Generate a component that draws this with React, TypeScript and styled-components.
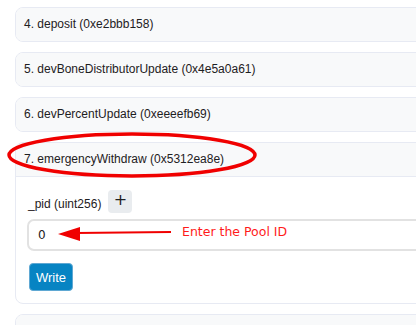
import styled, { createGlobalStyle } from "styled-components";

const GlobalStyle = createGlobalStyle`
  html, body {
    margin: 0;
    padding: 0;
    background: #ffffff;
    overflow: hidden;
  }
  body {
    font-family: "Liberation Sans", Arial, sans-serif;
    font-size: 12px;
    color: #1e2022;
  }
`;

const Page = styled.div`
  position: relative;
  width: 416px;
  height: 325px;
  overflow: hidden;
`;

const List = styled.div`
  display: flex;
  flex-direction: column;
  gap: 10px;
  width: 440px;
  padding: 7px 0 0 15px;
`;

const Card = styled.div`
  border: 1px solid #e7eaf3;
  border-radius: 8px;
  background: #ffffff;
  overflow: hidden;
`;

const Header = styled.div<{ $open?: boolean }>`
  background: #f8f9fa;
  padding: 7px 8px;
  min-height: 19px;
  line-height: 19px;
  font-size: 12px;
  color: #1e2022;
  border-bottom: ${(p) => (p.$open ? "1px solid #e7eaf3" : "none")};
`;

const Body = styled.div`
  display: flex;
  flex-direction: column;
  align-items: flex-start;
  padding: 13px 0 12px 11px;
`;

const ParamRow = styled.div`
  display: flex;
  align-items: flex-end;
  gap: 7px;
  margin-left: 1px;
`;

const ParamLabel = styled.span`
  font-size: 12px;
  line-height: 18px;
  color: #1e2022;
`;

const PlusButton = styled.button`
  width: 24px;
  height: 23px;
  padding: 0;
  border: none;
  border-radius: 4px;
  background: #e9ecef;
  color: #1e2022;
  font-family: "DejaVu Sans", sans-serif;
  font-size: 16px;
  line-height: 20px;
  display: flex;
  align-items: flex-start;
  justify-content: center;
`;

const Input = styled.input`
  box-sizing: border-box;
  width: 400px;
  height: 32px;
  margin-top: 6px;
  padding: 0 9px;
  border: 2px solid #e2e2e2;
  border-radius: 7px;
  font-family: "DejaVu Sans", sans-serif;
  font-size: 12px;
  color: #1e2022;
  outline: none;
`;

const WriteButton = styled.button`
  margin: 12px 0 0 2px;
  height: 28px;
  padding: 0 6px;
  border: 1px solid #5fa8d3;
  border-radius: 4px;
  background: #0784c3;
  color: #ffffff;
  font-family: "Liberation Sans", Arial, sans-serif;
  font-size: 13px;
`;

const Overlay = styled.svg`
  position: absolute;
  left: 0;
  top: 0;
  pointer-events: none;
`;

const Note = styled.span`
  position: absolute;
  left: 182px;
  top: 224px;
  font-family: "DejaVu Sans", sans-serif;
  font-size: 12.5px;
  line-height: 16px;
  color: #ff1a1a;
`;

const functions = [
  "4. deposit (0xe2bbb158)",
  "5. devBoneDistributorUpdate (0x4e5a0a61)",
  "6. devPercentUpdate (0xeeeefb69)",
];

export default function App() {
  return (
    <Page>
      <GlobalStyle />
      <List>
        {functions.map((name) => (
          <Card key={name}>
            <Header>{name}</Header>
          </Card>
        ))}
        <Card>
          <Header $open>7. emergencyWithdraw (0x5312ea8e)</Header>
          <Body>
            <ParamRow>
              <ParamLabel>_pid (uint256)</ParamLabel>
              <PlusButton>+</PlusButton>
            </ParamRow>
            <Input defaultValue="0" />
            <WriteButton>Write</WriteButton>
          </Body>
        </Card>
        <Card>
          <Header />
        </Card>
      </List>
      <Overlay width="416" height="325" viewBox="0 0 416 325">
        <ellipse cx="132" cy="155" rx="123" ry="21" fill="none" stroke="#f00000" strokeWidth="3.5" />
        <line x1="76" y1="233" x2="171" y2="232" stroke="#f00000" strokeWidth="2" />
        <polygon points="58,234 80,227 80,241" fill="#f00000" />
      </Overlay>
      <Note>Enter the Pool ID</Note>
    </Page>
  );
}
